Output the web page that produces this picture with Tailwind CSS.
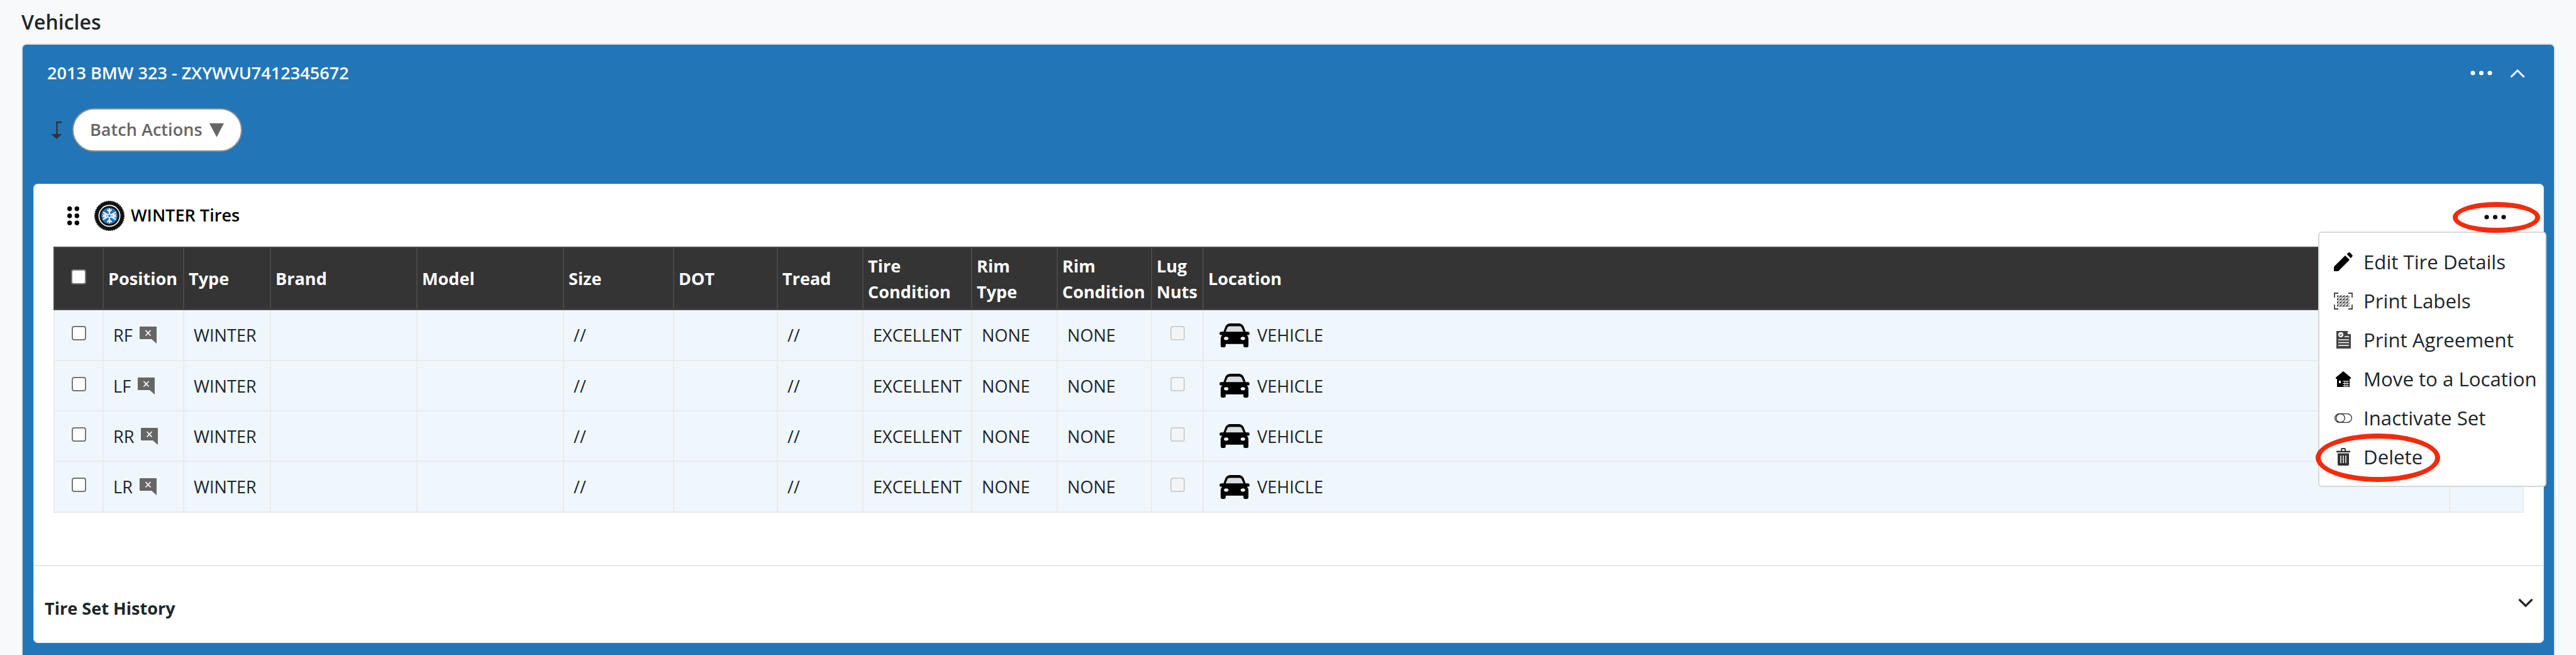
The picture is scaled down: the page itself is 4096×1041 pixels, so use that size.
<!DOCTYPE html>
<html lang="en">
<head>
  <meta charset="UTF-8" />
  <title>Vehicles</title>
  <script src="https://cdn.jsdelivr.net/npm/@tailwindcss/browser@4"></script>
</head>
<body class="relative h-[1041px] overflow-hidden bg-[#f8f9fb] font-['Open_Sans',sans-serif] text-[27.1px] text-[#212529]">

  <h2 class="flex h-[69px] items-center pl-[34px] text-[32px] font-semibold leading-none">Vehicles</h2>

  <div class="ml-[34px] mr-[33px] h-[1000px] rounded-t-[8px] border-2 border-[#e1e4e8] bg-[#2276b8]">
    <div class="flex h-[90px] items-center justify-between pl-[39px] pr-[46px] text-white">
      <span class="font-semibold">2013 BMW 323 - ZXYWVU7412345672</span>
      <div class="flex items-center gap-[28px]">
        <svg width="35" height="8" viewBox="0 0 35 8" fill="#fff"><circle cx="4" cy="4" r="3.6"/><circle cx="17.5" cy="4" r="3.6"/><circle cx="31" cy="4" r="3.6"/></svg>
        <svg width="24" height="15" viewBox="0 0 24 15" fill="none" stroke="#fff" stroke-width="3"><path d="M1.5 13.5 12 3l10.5 10.5"/></svg>
      </div>
    </div>

    <div class="flex items-center gap-[16px] pl-[45px] pt-[11px]">
      <svg width="18" height="28" viewBox="0 0 18 28" fill="#333"><path d="M17 1.2H9.5V22" fill="none" stroke="#333" stroke-width="2.4"/><path d="M.5 20h17L9 28z"/></svg>
      <button class="flex h-[69px] w-[270px] items-center gap-[11px] rounded-full border-2 border-[#8b9096] bg-white pl-[26px] font-semibold text-[#666]">
        Batch Actions
        <svg width="23" height="22" viewBox="0 0 23 22" fill="#666"><path d="M0 0h23L11.5 22z"/></svg>
      </button>
    </div>

    <div class="relative ml-[17px] mr-[16px] mt-[51px] h-[730px] rounded-[7px] border border-[#cfe0ee] bg-white">
      <div class="flex h-[99px] items-center pl-[53px] text-black">
        <svg width="19" height="30" viewBox="0 0 19 30" fill="#000"><circle cx="3.7" cy="3.7" r="3.7"/><circle cx="15.3" cy="3.7" r="3.7"/><circle cx="3.7" cy="15" r="3.7"/><circle cx="15.3" cy="15" r="3.7"/><circle cx="3.7" cy="26.3" r="3.7"/><circle cx="15.3" cy="26.3" r="3.7"/></svg>
        <svg class="ml-[24px] mr-[10px]" width="48" height="48" viewBox="0 0 48 48">
          <circle cx="24" cy="24" r="23" fill="#111" stroke="#111" stroke-width="2" stroke-dasharray="2 1"/>
          <circle cx="24" cy="24" r="17.5" fill="#fff"/>
          <circle cx="24" cy="24" r="15.8" fill="#111"/>
          <circle cx="24" cy="24" r="13" fill="#2276b8"/>
          <g stroke="#e8f2fa" stroke-width="2.2" stroke-linecap="round" fill="none">
            <path d="M24 13v22M14.5 18.5l19 11M14.5 29.5l19-11"/>
            <path d="M21 14.5l3 3 3-3M21 33.5l3-3 3 3M14 22.5l4 1.5-1 -4M34 25.5l-4-1.5 1 4M14 25.5l4-1.5-1 4M34 22.5l-4 1.5 1-4"/>
          </g>
          <circle cx="24" cy="24" r="2.6" fill="#2276b8" stroke="#e8f2fa" stroke-width="1.4"/>
        </svg>
        <span class="font-semibold">WINTER Tires</span>
        <svg class="absolute right-[59px] top-[48px]" width="35" height="8" viewBox="0 0 35 8" fill="#111"><circle cx="4" cy="4" r="3.6"/><circle cx="17.5" cy="4" r="3.6"/><circle cx="31" cy="4" r="3.6"/></svg>
      </div>

      <table class="ml-[31px] w-[3926px] table-fixed border-collapse leading-[41px]">
        <colgroup>
          <col class="w-[78px]"/><col class="w-[128px]"/><col class="w-[138px]"/><col class="w-[233px]"/><col class="w-[233px]"/><col class="w-[175px]"/><col class="w-[165px]"/><col class="w-[136px]"/><col class="w-[173px]"/><col class="w-[136px]"/><col class="w-[150px]"/><col class="w-[82px]"/><col class="w-[1982px]"/><col class="w-[117px]"/>
        </colgroup>
        <thead>
          <tr class="h-[99px] bg-[#343434] text-left font-bold text-white [&>th]:border-2 [&>th]:border-[#484848] [&>th]:pl-[7px] [&>th]:font-bold">
            <th class="!pl-0"><input type="checkbox" class="mx-auto mb-[6px] block h-[24px] w-[24px] appearance-none rounded-[4px] border-2 border-[#767676] bg-white"/></th>
            <th>Position</th>
            <th>Type</th>
            <th>Brand</th>
            <th>Model</th>
            <th>Size</th>
            <th>DOT</th>
            <th>Tread</th>
            <th>Tire<br/>Condition</th>
            <th>Rim<br/>Type</th>
            <th>Rim<br/>Condition</th>
            <th>Lug<br/>Nuts</th>
            <th>Location</th>
            <th></th>
          </tr>
        </thead>
        <tbody class="[&>tr]:h-[80px] [&>tr]:bg-[#eff7fd] [&_td]:border-2 [&_td]:border-[#e8ecef] [&_td]:pl-[15px]">
          <tr class="!h-[81px]">
            <td class="!pl-0"><input type="checkbox" class="mx-auto mb-[6px] block h-[23px] w-[23px] appearance-none rounded-[4px] border-2 border-[#767676] bg-white"/></td>
            <td><span class="flex items-center gap-[11px]">RF <svg width="27" height="27" viewBox="0 0 27 27"><path d="M1 0h25a1 1 0 0 1 1 1v26l-8-7H1a1 1 0 0 1-1-1V1a1 1 0 0 1 1-1z" fill="#666"/><path d="M9.5 6l8 8.500M17.500 6l-8 8.500" stroke="#fff" stroke-width="1.800"/></svg></span></td>
            <td>WINTER</td><td></td><td></td><td>//</td><td></td><td>//</td><td>EXCELLENT</td><td>NONE</td><td>NONE</td>
            <td class="!pl-0"><input type="checkbox" disabled class="mx-auto mb-[6px] block h-[23px] w-[23px] appearance-none rounded-[4px] border-2 border-[#cdd1d4] bg-[#f3f5f7]"/></td>
            <td class="!pl-[25px]"><span class="flex items-center gap-[12px]"><svg width="48" height="38" viewBox="0 0 54 43"><path d="M10 7C11 3 15 0 20 0h14c5 0 9 3 10 7l3 8h4a3 3 0 0 1 0 6h-2c2 2 3 4 3 7v12a3 3 0 0 1-3 3h-3a3 3 0 0 1-3-3v-3H11v3a3 3 0 0 1-3 3H5a3 3 0 0 1-3-3V28c0-3 1-5 3-7H3a3 3 0 0 1 0-6h4z"/><path d="M14 8c.5-2 2-3 5-3h16c3 0 4.500 1 5 3l3 7H11z" fill="#d8dde2"/><ellipse cx="12" cy="27" rx="4" ry="3" fill="#eff7fd"/><ellipse cx="42" cy="27" rx="4" ry="3" fill="#eff7fd"/></svg>VEHICLE</span></td>
            <td></td>
          </tr>
          <tr>
            <td class="!pl-0"><input type="checkbox" class="mx-auto mb-[6px] block h-[23px] w-[23px] appearance-none rounded-[4px] border-2 border-[#767676] bg-white"/></td>
            <td><span class="flex items-center gap-[11px]">LF <svg width="27" height="27" viewBox="0 0 27 27"><path d="M1 0h25a1 1 0 0 1 1 1v26l-8-7H1a1 1 0 0 1-1-1V1a1 1 0 0 1 1-1z" fill="#666"/><path d="M9.5 6l8 8.500M17.500 6l-8 8.500" stroke="#fff" stroke-width="1.800"/></svg></span></td>
            <td>WINTER</td><td></td><td></td><td>//</td><td></td><td>//</td><td>EXCELLENT</td><td>NONE</td><td>NONE</td>
            <td class="!pl-0"><input type="checkbox" disabled class="mx-auto mb-[6px] block h-[23px] w-[23px] appearance-none rounded-[4px] border-2 border-[#cdd1d4] bg-[#f3f5f7]"/></td>
            <td class="!pl-[25px]"><span class="flex items-center gap-[12px]"><svg width="48" height="38" viewBox="0 0 54 43"><path d="M10 7C11 3 15 0 20 0h14c5 0 9 3 10 7l3 8h4a3 3 0 0 1 0 6h-2c2 2 3 4 3 7v12a3 3 0 0 1-3 3h-3a3 3 0 0 1-3-3v-3H11v3a3 3 0 0 1-3 3H5a3 3 0 0 1-3-3V28c0-3 1-5 3-7H3a3 3 0 0 1 0-6h4z"/><path d="M14 8c.5-2 2-3 5-3h16c3 0 4.500 1 5 3l3 7H11z" fill="#d8dde2"/><ellipse cx="12" cy="27" rx="4" ry="3" fill="#eff7fd"/><ellipse cx="42" cy="27" rx="4" ry="3" fill="#eff7fd"/></svg>VEHICLE</span></td>
            <td></td>
          </tr>
          <tr>
            <td class="!pl-0"><input type="checkbox" class="mx-auto mb-[6px] block h-[23px] w-[23px] appearance-none rounded-[4px] border-2 border-[#767676] bg-white"/></td>
            <td><span class="flex items-center gap-[11px]">RR <svg width="27" height="27" viewBox="0 0 27 27"><path d="M1 0h25a1 1 0 0 1 1 1v26l-8-7H1a1 1 0 0 1-1-1V1a1 1 0 0 1 1-1z" fill="#666"/><path d="M9.5 6l8 8.500M17.500 6l-8 8.500" stroke="#fff" stroke-width="1.800"/></svg></span></td>
            <td>WINTER</td><td></td><td></td><td>//</td><td></td><td>//</td><td>EXCELLENT</td><td>NONE</td><td>NONE</td>
            <td class="!pl-0"><input type="checkbox" disabled class="mx-auto mb-[6px] block h-[23px] w-[23px] appearance-none rounded-[4px] border-2 border-[#cdd1d4] bg-[#f3f5f7]"/></td>
            <td class="!pl-[25px]"><span class="flex items-center gap-[12px]"><svg width="48" height="38" viewBox="0 0 54 43"><path d="M10 7C11 3 15 0 20 0h14c5 0 9 3 10 7l3 8h4a3 3 0 0 1 0 6h-2c2 2 3 4 3 7v12a3 3 0 0 1-3 3h-3a3 3 0 0 1-3-3v-3H11v3a3 3 0 0 1-3 3H5a3 3 0 0 1-3-3V28c0-3 1-5 3-7H3a3 3 0 0 1 0-6h4z"/><path d="M14 8c.5-2 2-3 5-3h16c3 0 4.500 1 5 3l3 7H11z" fill="#d8dde2"/><ellipse cx="12" cy="27" rx="4" ry="3" fill="#eff7fd"/><ellipse cx="42" cy="27" rx="4" ry="3" fill="#eff7fd"/></svg>VEHICLE</span></td>
            <td></td>
          </tr>
          <tr class="!h-[81px]">
            <td class="!pl-0"><input type="checkbox" class="mx-auto mb-[6px] block h-[23px] w-[23px] appearance-none rounded-[4px] border-2 border-[#767676] bg-white"/></td>
            <td><span class="flex items-center gap-[11px]">LR <svg width="27" height="27" viewBox="0 0 27 27"><path d="M1 0h25a1 1 0 0 1 1 1v26l-8-7H1a1 1 0 0 1-1-1V1a1 1 0 0 1 1-1z" fill="#666"/><path d="M9.5 6l8 8.500M17.500 6l-8 8.500" stroke="#fff" stroke-width="1.800"/></svg></span></td>
            <td>WINTER</td><td></td><td></td><td>//</td><td></td><td>//</td><td>EXCELLENT</td><td>NONE</td><td>NONE</td>
            <td class="!pl-0"><input type="checkbox" disabled class="mx-auto mb-[6px] block h-[23px] w-[23px] appearance-none rounded-[4px] border-2 border-[#cdd1d4] bg-[#f3f5f7]"/></td>
            <td class="!pl-[25px]"><span class="flex items-center gap-[12px]"><svg width="48" height="38" viewBox="0 0 54 43"><path d="M10 7C11 3 15 0 20 0h14c5 0 9 3 10 7l3 8h4a3 3 0 0 1 0 6h-2c2 2 3 4 3 7v12a3 3 0 0 1-3 3h-3a3 3 0 0 1-3-3v-3H11v3a3 3 0 0 1-3 3H5a3 3 0 0 1-3-3V28c0-3 1-5 3-7H3a3 3 0 0 1 0-6h4z"/><path d="M14 8c.5-2 2-3 5-3h16c3 0 4.500 1 5 3l3 7H11z" fill="#d8dde2"/><ellipse cx="12" cy="27" rx="4" ry="3" fill="#eff7fd"/><ellipse cx="42" cy="27" rx="4" ry="3" fill="#eff7fd"/></svg>VEHICLE</span></td>
            <td></td>
          </tr>
        </tbody>
      </table>

      <div class="mt-[83px] flex h-[123px] justify-between border-t-2 border-[#e5e7ea] pl-[17px] pr-[16px] pt-[49px]">
        <span class="font-bold leading-[36px]">Tire Set History</span>
        <svg class="mt-[2px]" width="24" height="15" viewBox="0 0 24 15" fill="none" stroke="#212529" stroke-width="3.200"><path d="M1.500 1.500 12 12 22.500 1.500"/></svg>
      </div>

      <!-- tire set dropdown -->
      <div class="absolute -right-[5px] top-[75px] w-[363px] rounded-[6px] border-2 border-[#d3d8dc] bg-white py-[15px] text-[31.2px]">
        <div class="flex h-[62px] items-center pl-[23px]">
          <span class="mr-[17px] flex w-[30px] justify-center"><svg width="30" height="30" viewBox="0 0 30 30"><path d="M0 30v-7L18 5l7 7L7 30z"/><path d="M20.500 3 23 .8a2 2 0 0 1 2.800 0L29 4a2 2 0 0 1 0 2.800l-2 2.700z"/></svg></span>
          Edit Tire Details
        </div>
        <div class="flex h-[62px] items-center pl-[23px]">
          <span class="mr-[17px] flex w-[30px] justify-center"><svg width="30" height="27" viewBox="0 0 30 27" fill="none"><defs><pattern id="qr" width="5" height="5" patternUnits="userSpaceOnUse"><rect width="5" height="5" fill="#ddd"/><rect width="2" height="2" fill="#333"/><rect x="3" y="1" width="2" height="1" fill="#555"/><rect x="1" y="3" width="1" height="2" fill="#444"/><rect x="3" y="3" width="1" height="1" fill="#333"/></pattern></defs><path d="M1 8V1h6M23 1h6v7M29 19v7h-6M7 26H1v-7" stroke="#444" stroke-width="1.800"/><rect x="5" y="4" width="20" height="19" fill="url(#qr)"/></svg></span>
          Print Labels
        </div>
        <div class="flex h-[62px] items-center pl-[23px]">
          <span class="mr-[17px] flex w-[30px] justify-center"><svg width="23" height="28" viewBox="0 0 23 28"><path d="M0 0h18l5 5v23H0z" fill="#444"/><path d="M18 0l5 5h-5z" fill="#fff"/><circle cx="7" cy="6" r="4" fill="#fff"/><path d="M5 6l1.500 1.500L9 4.800" fill="none" stroke="#444" stroke-width="1.200"/><path d="M13 9h7M3 14h17M3 18.500h17M3 23h17" stroke="#fff" stroke-width="1.300"/></svg></span>
          Print Agreement
        </div>
        <div class="flex h-[62px] items-center pl-[23px]">
          <span class="mr-[17px] flex w-[30px] justify-center"><svg width="24" height="25" viewBox="0 0 24 25"><path d="M12 0 24 10v2H0v-2z" fill="#000"/><path d="M2 12h20v13H2z" fill="#000"/><rect x="5" y="15" width="3" height="4" fill="#fff"/><path d="M11 16h10M11 19.500h10M11 23h10M14.500 15v10M18 15v10" stroke="#fff" stroke-width="1"/></svg></span>
          Move to a Location
        </div>
        <div class="flex h-[62px] items-center pl-[23px]">
          <span class="mr-[17px] flex w-[30px] justify-center"><svg width="28" height="15" viewBox="0 0 28 15" fill="none" stroke="#333" stroke-width="1.300"><rect x=".7" y=".7" width="26.600" height="13.600" rx="6.800"/><circle cx="9.500" cy="7.500" r="6.800"/></svg></span>
          Inactivate Set
        </div>
        <div class="flex h-[62px] items-center pl-[23px]">
          <span class="mr-[17px] flex w-[30px] justify-center"><svg width="22" height="28" viewBox="0 0 22 28"><path d="M0 4.500h7V2a2 2 0 0 1 2-2h4a2 2 0 0 1 2 2v2.500h7V7H0zM9 2v2.500h4V2z" fill="#333"/><path d="M2 8.500h18V26a2 2 0 0 1-2 2H4a2 2 0 0 1-2-2z" fill="#333"/><path d="M7 12v12M11 12v12M15 12v12" stroke="#fff" stroke-width="1.500"/></svg></span>
          Delete
        </div>
      </div>
    </div>
  </div>

  <!-- red annotation rings -->
  <div class="absolute left-[3900px] top-[321px] h-[49px] w-[139px] rounded-[50%] border-[8px] border-[#f42a0c]"></div>
  <div class="absolute left-[3682px] top-[689px] h-[77px] w-[198px] rounded-[50%] border-[8px] border-[#f42a0c]"></div>
</body>
</html>
